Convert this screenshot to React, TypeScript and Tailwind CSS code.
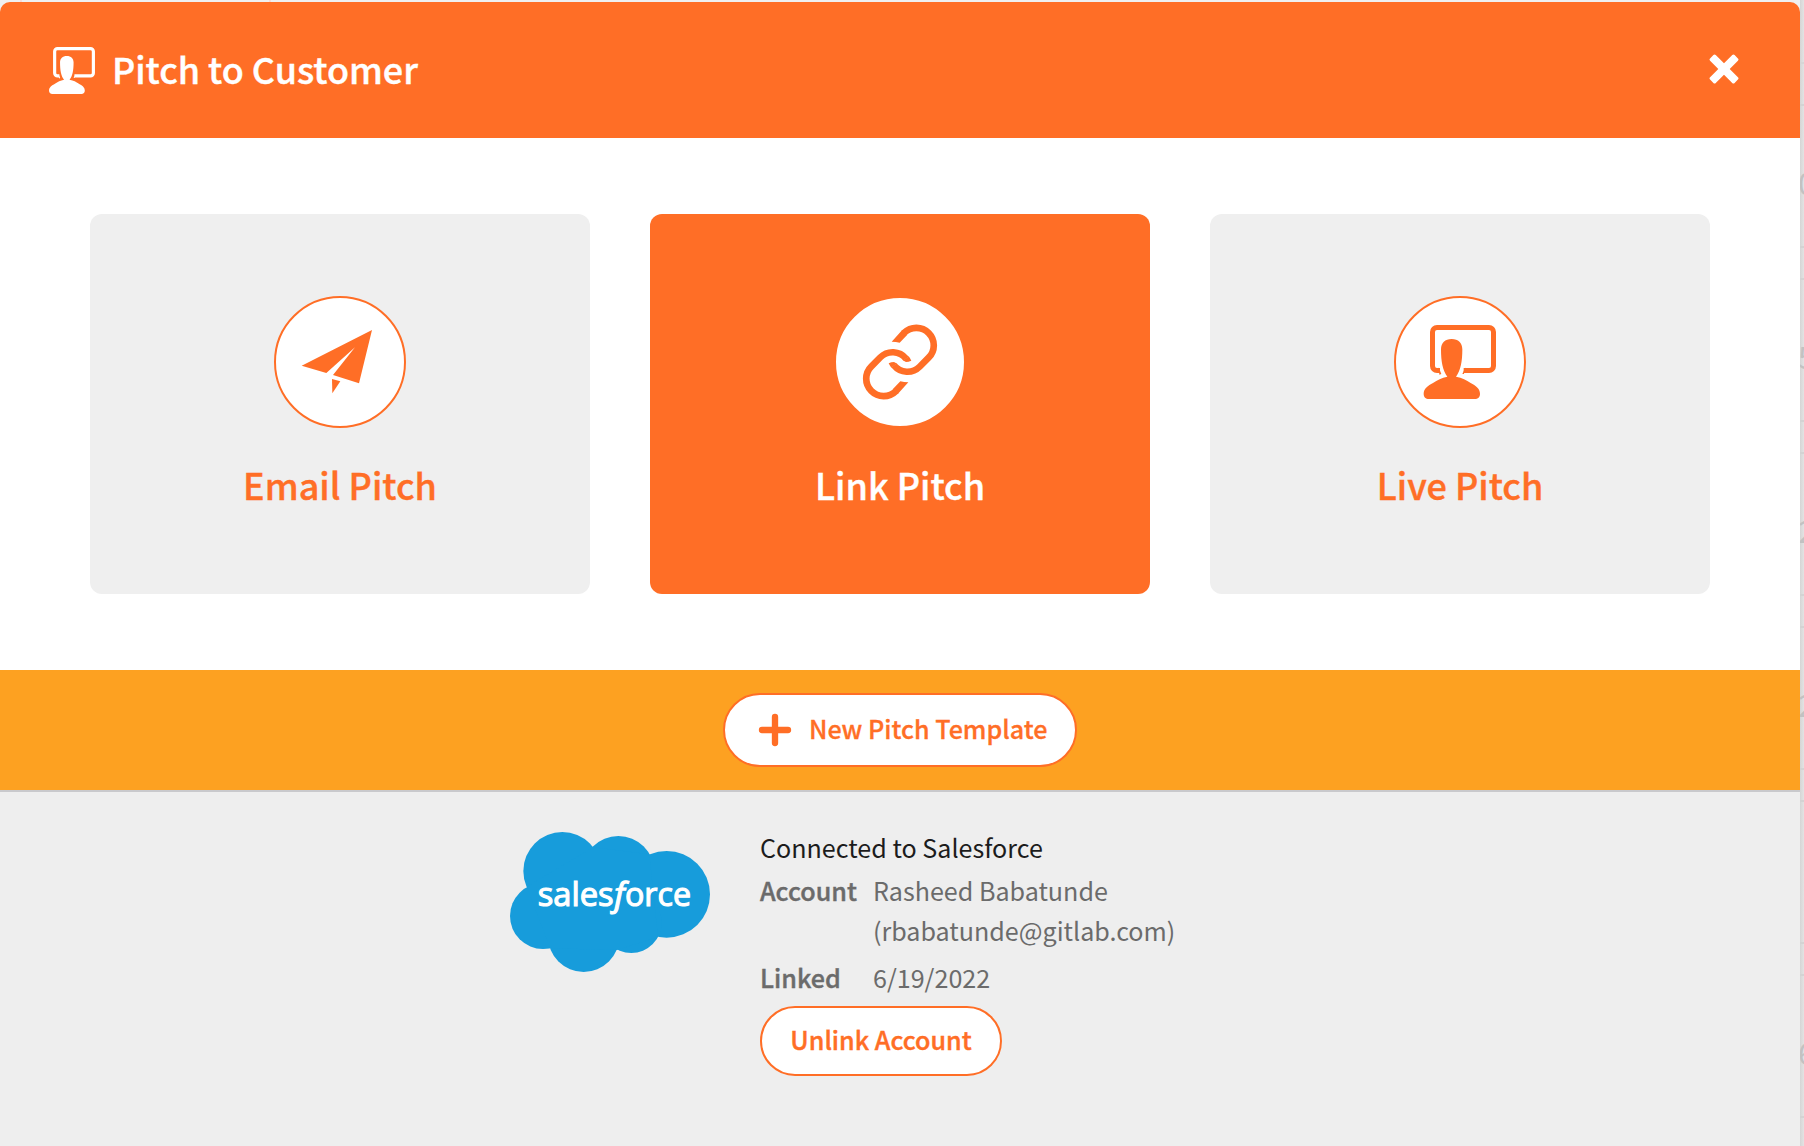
import type { ReactNode } from "react";

function PresenterShapes() {
  return (
    <>
      <path
        d="M300 271.5 H291 A13.5 13.5 0 0 1 277.500 258 V156 A13.500 13.500 0 0 1 291 142.500 H447 A13.500 13.500 0 0 1 460.500 156 V258 A13.500 13.500 0 0 1 447 271.500 H371"
        fill="none"
        stroke="currentColor"
        strokeWidth="15"
      />
      <path d="M296 262 L304 282 L298 284 Z M376 262 L367 282 L372 282 Z" fill="currentColor" />
      <path
        d="M335 177 C355 177 367 189 367 208 C367 245 362 272 348 290 C367 293 379 301 392 309 C407 317 420 326 420 341 C420 351 414 357 404 357 H267 C257 357 251 351 251 341 C251 326 264 317 279 309 C292 301 305 293 322 290 C308 272 303 245 303 208 C303 189 315 177 335 177 Z"
        fill="currentColor"
      />
    </>
  );
}

function PresenterIcon({ className, viewBox }: { className: string; viewBox: string }) {
  return (
    <svg className={className} viewBox={viewBox} aria-hidden="true">
      <PresenterShapes />
    </svg>
  );
}

function PlaneIcon() {
  return (
    <svg className="size-32" viewBox="168 54 384 384" fill="currentColor" aria-hidden="true">
      <path d="M456 150 L245 257 L319 279 L405 202 L339 285 L417 310 Z" />
      <path d="M336 297 L361 304 L337 340 Z" />
    </svg>
  );
}

function ChainHalf({ transform }: { transform?: string }) {
  return (
    <g transform={transform}>
      <path
        d="M371.500 159.500 L372.200 158.800 A52 52 0 0 1 445.800 233.200 L418.800 260.200 A52 52 0 0 1 342 256.400"
        fill="none"
        stroke="currentColor"
        strokeWidth="20"
      />
      <path
        d="M366 151 L335 185 Q348 185 359 188 L380.500 165.500 Z M334 263 Q329 257 326 250 Q334 246 342 246 L350.500 250.500 Z"
        fill="currentColor"
      />
    </g>
  );
}

function ChainIcon() {
  return (
    <svg className="size-32" viewBox="168 54 384 384" aria-hidden="true">
      <ChainHalf />
      <ChainHalf transform="rotate(180 360 246)" />
    </svg>
  );
}

function SalesforceLogo() {
  return (
    <svg className="h-[140px] w-[200px] shrink-0" viewBox="60 66 600 420" role="img" aria-label="Salesforce">
      <g fill="#179cdb">
        <circle cx="217" cy="183" r="117" />
        <circle cx="385" cy="186" r="108" />
        <circle cx="530" cy="253" r="130" />
        <circle cx="424" cy="338" r="91" />
        <circle cx="281" cy="379" r="107" />
        <circle cx="159" cy="318" r="99" />
        <path d="M110 230 L310 112 L478 133 L504 381 L381 420 L181 415 Z" />
      </g>
      <g fill="#fff" stroke="#fff" strokeWidth="3.5" fontSize="100" className="font-['Open_Sans',sans-serif]">
        <text x="143" y="289" textLength="228" lengthAdjust="spacingAndGlyphs">
          sales
        </text>
        <text x="405" y="289" textLength="198" lengthAdjust="spacingAndGlyphs">
          orce
        </text>
        <text x="373" y="289" fontStyle="italic">
          f
        </text>
      </g>
    </svg>
  );
}

function PitchCard({ label, active, children }: { label: string; active?: boolean; children: ReactNode }) {
  return (
    <button
      className={
        active
          ? "flex h-[380px] w-[500px] flex-col items-center rounded-xl bg-[#ff6e26] pt-[82px] text-white"
          : "flex h-[380px] w-[500px] flex-col items-center rounded-xl bg-[#efefef] pt-[82px] text-[#ff6e26]"
      }
    >
      <span className="flex size-[132px] items-center justify-center rounded-full border-2 border-[#ff6e26] bg-white text-[#ff6e26]">
        {children}
      </span>
      <span className="mt-8 text-[36px] leading-[48px] font-medium [-webkit-text-stroke:0.4px_currentColor]">
        {label}
      </span>
    </button>
  );
}

function PageEdge() {
  return (
    <div className="flex h-full w-1 flex-col overflow-hidden bg-linear-to-r from-[#d5d5d5] to-[#e3e3e3]">
      <div className="h-[64px] shrink-0 border-b-2 border-[#d6d6d6]" />
      <div className="h-10 shrink-0" />
      {["0", "5", "2", "2", "", "6"].map((digit, i) => (
        <div key={i} className="h-[174px] shrink-0 border-t-2 border-[#d3d3d3]">
          <div className="h-[142px] border-b-2 border-[#d3d3d3] pt-[46px] text-[31px] leading-[60px] text-[#c2c2c2]">
            <span className="-ml-0.5">{digit}</span>
          </div>
        </div>
      ))}
    </div>
  );
}

export default function App() {
  return (
    <div className="flex h-[1146px] w-[1804px] overflow-hidden bg-[#f0f0f0] font-['Noto_Sans_CJK_SC','Source_Sans_Pro',sans-serif]">
      <div className="flex w-[1800px] shrink-0 flex-col">
        <div className="flex h-0.5 shrink-0 pl-5">
          <span className="h-full w-0.5 bg-[#f8dcd8]" />
          <span className="ml-[247px] h-full w-0.5 bg-[#f8dcd8]" />
        </div>

        <div className="flex flex-1 flex-col overflow-hidden rounded-t-[10px]">
          <header className="flex h-[136px] shrink-0 items-center bg-[#ff6e26] pr-[61px] pl-[49px] text-white">
            <PresenterIcon className="h-[47px] w-[46px]" viewBox="251 135 217 222" />
            <h1 className="ml-[17px] flex-1 pb-[5px] text-[35.9px] leading-[48px] font-medium [-webkit-text-stroke:0.4px_currentColor]">
              Pitch to Customer
            </h1>
            <button aria-label="Close" className="pb-[3px]">
              <svg className="block size-[30px]" viewBox="-45 -45 90 90" fill="currentColor">
                <rect x="-52" y="-12" width="104" height="24" rx="5" transform="rotate(45)" />
                <rect x="-52" y="-12" width="104" height="24" rx="5" transform="rotate(-45)" />
              </svg>
            </button>
          </header>

          <main className="flex h-[532px] shrink-0 items-center justify-center gap-[60px] bg-white">
            <PitchCard label="Email Pitch">
              <PlaneIcon />
            </PitchCard>
            <PitchCard label="Link Pitch" active>
              <ChainIcon />
            </PitchCard>
            <PitchCard label="Live Pitch">
              <PresenterIcon className="size-32" viewBox="168 54 384 384" />
            </PitchCard>
          </main>

          <div className="flex h-[120px] shrink-0 items-center justify-center bg-[#fda121]">
            <button className="flex h-[74px] w-[354px] items-center rounded-full border-2 border-[#ff6e26] bg-white pl-[33px] text-[#ff6e26]">
              <svg className="size-[34px]" viewBox="-51 -51 102 102" aria-hidden="true">
                <path d="M-39 0 H39 M0 -39 V39" stroke="currentColor" strokeWidth="19" strokeLinecap="round" />
              </svg>
              <span className="ml-[17px] pb-1 text-[25.1px] leading-10 font-medium whitespace-nowrap [-webkit-text-stroke:0.3px_currentColor]">
                New Pitch Template
              </span>
            </button>
          </div>

          <footer className="flex flex-1 items-start border-t-2 border-[#c9c9cc] bg-[#eee] pt-[35px] pl-[510px]">
            <div className="pt-[5px]">
              <SalesforceLogo />
            </div>
            <div className="ml-[50px] text-[25.1px] leading-10 text-[#6b6b6b]">
              <p className="text-[#1c1c1c]">Connected to Salesforce</p>
              <dl className="mt-[3px] grid grid-cols-[113px_auto] gap-y-[7px]">
                <dt className="font-medium [-webkit-text-stroke:0.4px_currentColor]">Account</dt>
                <dd>
                  Rasheed Babatunde
                  <br />
                  (rbabatunde@gitlab.com)
                </dd>
                <dt className="font-medium [-webkit-text-stroke:0.4px_currentColor]">Linked</dt>
                <dd>6/19/2022</dd>
              </dl>
              <button className="mt-[9px] flex h-[70px] w-[242px] items-center justify-center rounded-full border-2 border-[#ff6e26] bg-white pb-1 font-medium text-[#ff6e26] [-webkit-text-stroke:0.4px_currentColor]">
                Unlink Account
              </button>
            </div>
          </footer>
        </div>
      </div>
      <PageEdge />
    </div>
  );
}
